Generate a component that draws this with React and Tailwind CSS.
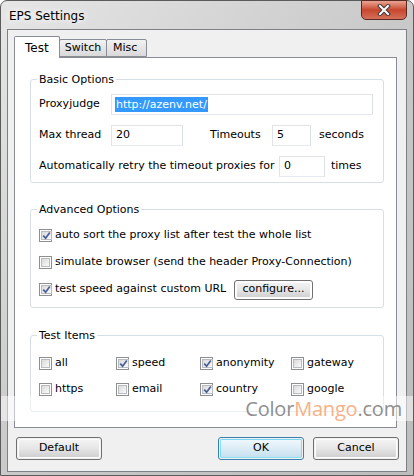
import React from "react";

const F = "font-['DejaVu_Sans',sans-serif] text-[11px] text-black";

const Check = ({ checked }) => (
  <span className="w-[13px] h-[13px] border border-[#8e8f8f] bg-white p-px shrink-0 flex">
    <span className="flex-1 border border-[#b7bcc2] bg-gradient-to-br from-[#dadada] to-[#fafafa] flex items-center justify-center">
      {checked && (
        <svg width="9" height="9" viewBox="0 0 9 9">
          <path d="M1.2 4.6 L3.6 7.2 L7.8 1.4" stroke="#4a5f97" strokeWidth="1.7" fill="none" />
        </svg>
      )}
    </span>
  </span>
);

const Input = ({ w, value, selected }) => (
  <div className={`${w} h-[21px] border border-[#abadb3] border-t-[#e3e3e3] border-l-[#e2e3ea] border-r-[#dbdfe6] border-b-[#e3e9ef] bg-white flex items-center pl-[3px]`}>
    {selected ? (
      <span className="bg-[#3399ff] text-white px-px leading-[15px]">{value}</span>
    ) : (
      <span className="px-px">{value}</span>
    )}
  </div>
);

const Btn = ({ children, w, def }) => (
  <div
    className={`${w} h-[23px] rounded-[3px] border ${def ? "border-[#3c7fb1]" : "border-[#707070]"} p-px`}
  >
    <div
      className={`h-full rounded-[2px] border ${def ? "border-[#48d2f5]/60" : "border-[#fcfcfc]"} bg-gradient-to-b ${def ? "from-[#eef7fc] via-[#dcecf6] to-[#c6e0ee]" : "from-[#f2f2f2] via-[#e6e6e6] to-[#d0d0d0]"} flex items-center justify-center`}
    >
      {children}
    </div>
  </div>
);

const Group = ({ title, h, children, mt }) => (
  <div className={`${mt} mx-[15px] mr-[12px] ${h} border border-[#d5dfe5] rounded-[3px] flex flex-col`}>
    <div className="-mt-[7px] ml-[6px] px-[2px] bg-white w-fit leading-[14px] h-[14px]">{title}</div>
    {children}
  </div>
);

const CheckRow = ({ checked, label, h }) => (
  <div className={`${h} flex items-center`}>
    <Check checked={checked} />
    <span className="ml-[3px]">{label}</span>
  </div>
);

export default function App() {
  return (
    <div className={`${F} w-[414px] h-[476px] overflow-hidden bg-white`}>
      <div className="w-[414px] h-[476px] rounded-t-[7px] border border-[#5b5b5b] bg-gradient-to-br from-[#e6e6e6] via-[#c9c9c9] to-[#bdbdbd] flex flex-col relative">
        {/* title bar */}
        <div className="h-[28px] flex items-start relative">
          <div className="ml-[7px] mt-[6px] text-[12px] px-px [text-shadow:0_0_6px_#fff,0_0_8px_#fff]">EPS Settings</div>
          <div className="absolute left-[360px] -top-px w-[46px] h-[20px] rounded-b-[5px] border border-[#5a2a22] bg-gradient-to-b from-[#e8a493] via-[#c8452c] to-[#d4705a] flex items-center justify-center">
            <svg width="14" height="12" viewBox="0 0 14 12">
              <path d="M3 2 L11 10 M11 2 L3 10" stroke="#3b3b3b" strokeWidth="4" strokeLinecap="square" />
              <path d="M3 2 L11 10 M11 2 L3 10" stroke="#ffffff" strokeWidth="2" strokeLinecap="square" />
            </svg>
          </div>
        </div>
        {/* client area */}
        <div className="ml-[6px] w-[400px] h-[443px] border border-[#7d8085] bg-[#f0f0f0] flex flex-col">
          <div className="pl-[6px] pt-[6px]">
            {/* tabs */}
            <div className="flex items-end h-[21px]">
              <div className="relative z-10 w-[46px] h-[22px] -mb-px bg-white border border-[#898c95] border-b-0 rounded-t-[2px] pl-[10px] pt-[2px] text-[12px]">
                Test
              </div>
              <div className="-ml-px w-[48px] h-[18px] border border-[#898c95] bg-gradient-to-b from-[#f2f2f2] to-[#d9d9d9] flex items-center justify-center rounded-t-[2px]">
                Switch
              </div>
              <div className="-ml-px w-[41px] h-[18px] border border-[#898c95] bg-gradient-to-b from-[#f2f2f2] to-[#d9d9d9] pl-[6px] flex items-center rounded-t-[2px]">
                Misc
              </div>
            </div>
            {/* panel */}
            <div className="w-[383px] h-[371px] border border-[#898c95] bg-white flex flex-col">
              <Group title="Basic Options" h="h-[104px]" mt="mt-[21px]">
                <div className="pl-[8px] pt-[7px] flex flex-col gap-[10px]">
                  <div className="flex items-center h-[21px]">
                    <span className="w-[72px]">Proxyjudge</span>
                    <Input w="w-[262px]" value="http://azenv.net/" selected />
                  </div>
                  <div className="flex items-center h-[21px]">
                    <span className="w-[72px]">Max thread</span>
                    <Input w="w-[72px]" value="20" />
                    <span className="w-[89px] pl-[27px]">Timeouts</span>
                    <Input w="w-[39px]" value="5" />
                    <span className="ml-[8px]">seconds</span>
                  </div>
                  <div className="flex items-center h-[21px]">
                    <span className="w-[240px] whitespace-nowrap">Automatically retry the timeout proxies for</span>
                    <Input w="w-[46px]" value="0" />
                    <span className="ml-[6px]">times</span>
                  </div>
                </div>
              </Group>
              <Group title="Advanced Options" h="h-[99px]" mt="mt-[26px]">
                <div className="pl-[8px] pt-[4px] flex flex-col">
                  <CheckRow h="h-[28px]" checked label="auto sort the proxy list after test the whole list" />
                  <CheckRow h="h-[27px]" label="simulate browser (send the header Proxy-Connection)" />
                  <div className="h-[27px] flex items-center">
                    <Check checked />
                    <span className="ml-[3px] w-[179px] whitespace-nowrap">test speed against custom URL</span>
                    <Btn w="w-[79px] !h-[20px]">configure...</Btn>
                  </div>
                </div>
              </Group>
              <Group title="Test Items" h="h-[77px]" mt="mt-[27px]">
                <div className="pl-[8px] pt-[7px] grid grid-cols-[77px_84px_91px_1fr]">
                  {[
                    ["all", false],
                    ["speed", true],
                    ["anonymity", true],
                    ["gateway", false],
                    ["https", false],
                    ["email", false],
                    ["country", true],
                    ["google", false],
                  ].map(([l, c]) => (
                    <div key={l} className="h-[26px] flex items-center">
                      <Check checked={c} />
                      <span className="ml-[3px]">{l}</span>
                    </div>
                  ))}
                </div>
              </Group>
            </div>
          </div>
          {/* buttons */}
          <div className="mt-[9px] ml-[8px] flex">
            <Btn w="w-[86px]">Default</Btn>
            <div className="w-[116px]" />
            <Btn w="w-[86px]" def>OK</Btn>
            <div className="w-[9px]" />
            <Btn w="w-[86px]">Cancel</Btn>
          </div>
        </div>
        {/* watermark band */}
        <div className="absolute left-0 right-0 top-[395px] h-[25px] bg-white/50 flex items-center justify-end pr-[11px]">
          <span className="font-['Open_Sans',sans-serif] text-[20px] leading-[25px] tracking-[-0.2px]">
            <span className="text-[#8f8f8f]">Color</span>
            <span className="text-[#f9b088]">Mango</span>
            <span className="text-[#8f8f8f]">.com</span>
          </span>
        </div>
      </div>
    </div>
  );
}
